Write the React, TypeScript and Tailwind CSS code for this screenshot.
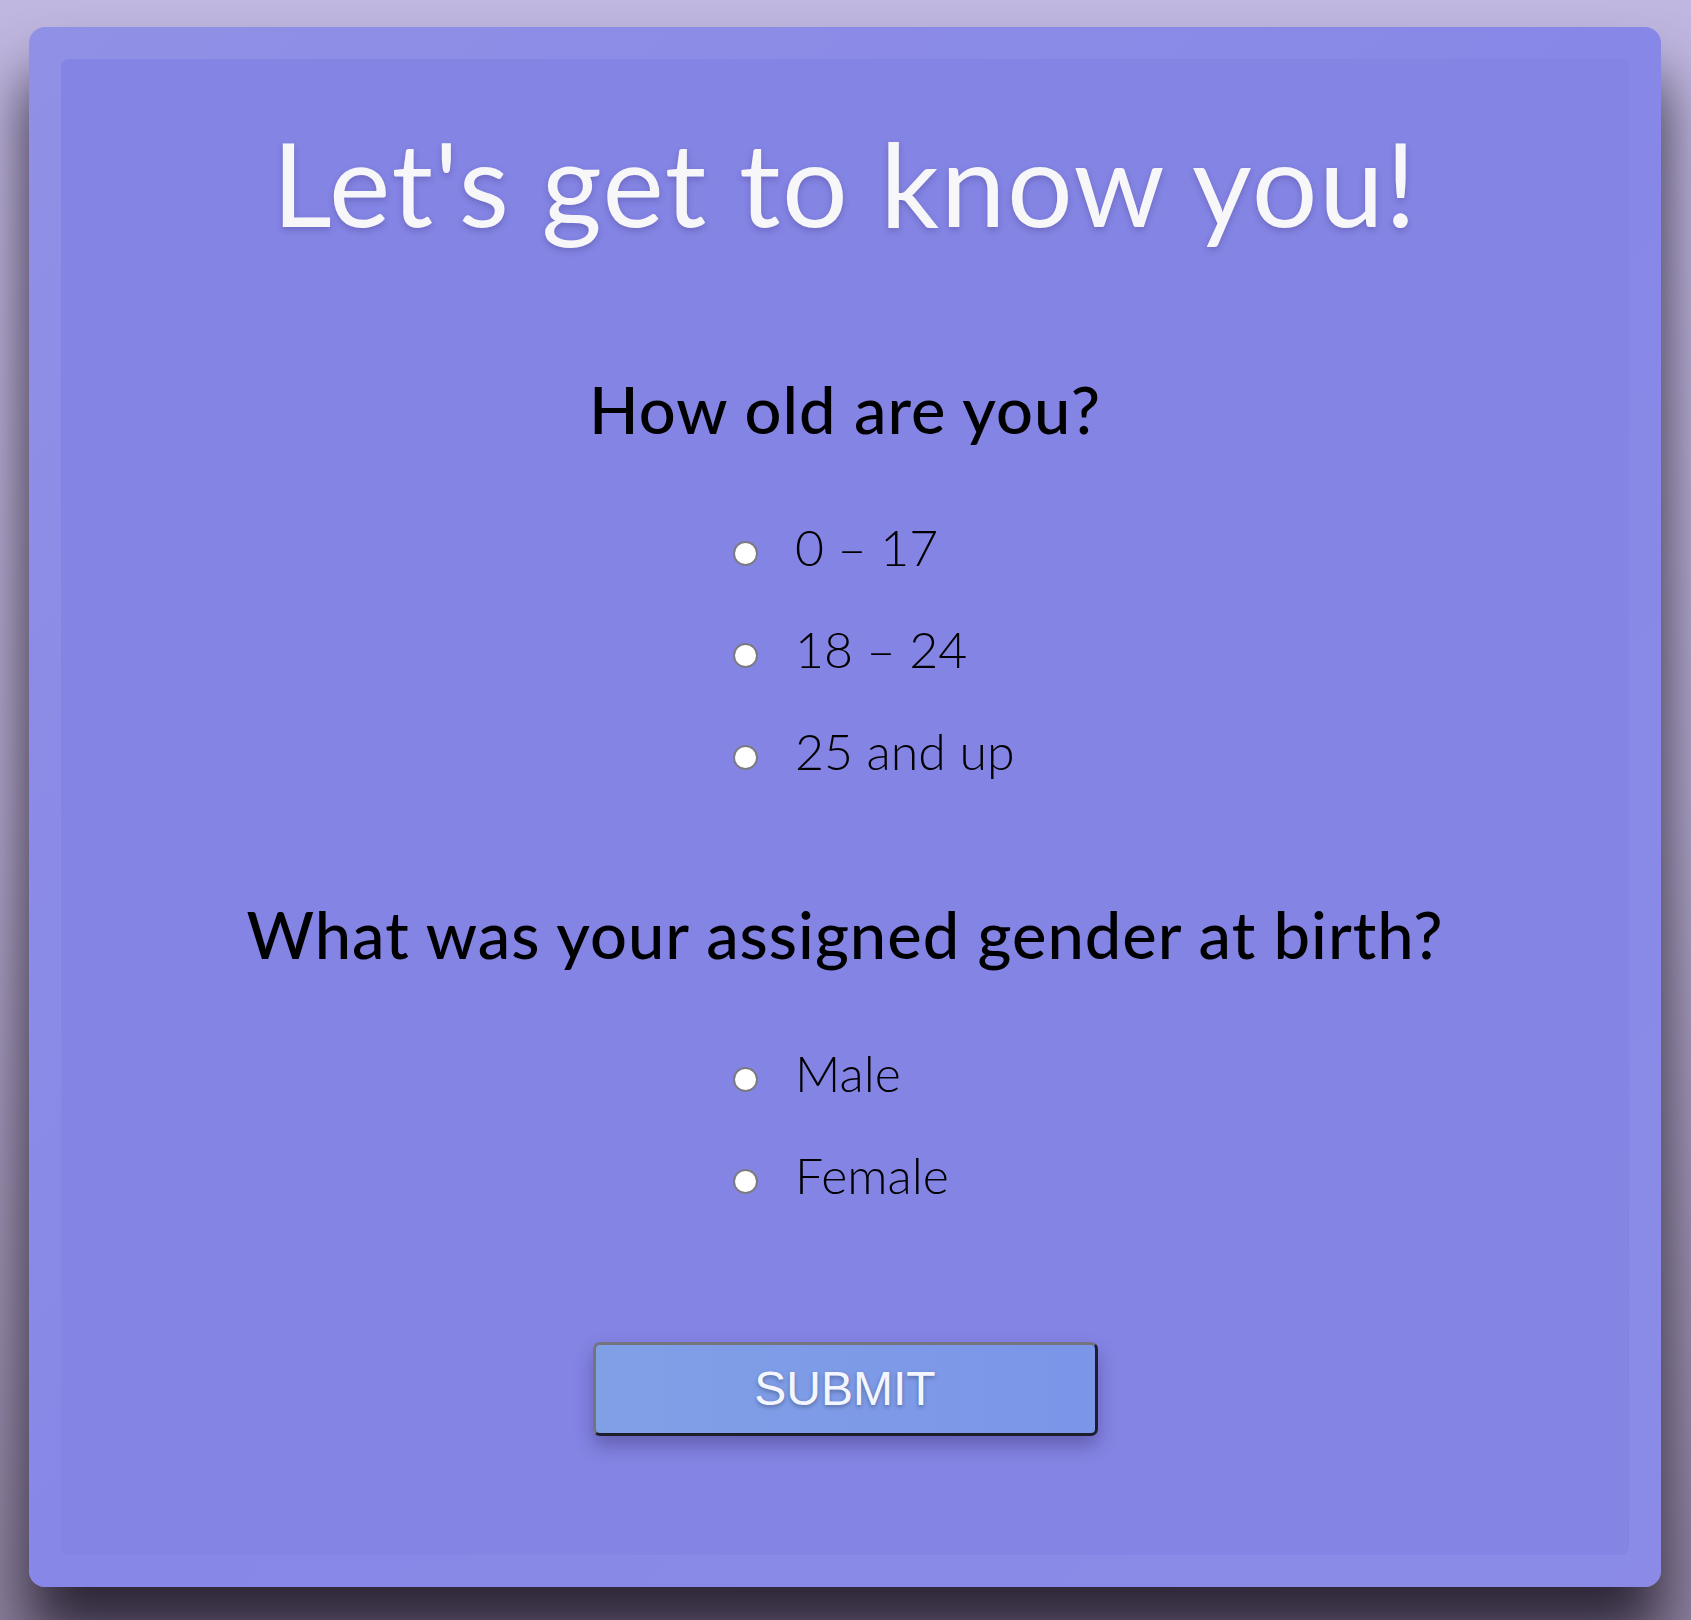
import { useState } from 'react'

const ages = ['0 – 17', '18 – 24', '25 and up']
const genders = ['Male', 'Female']

function Option({ name, label, checked, onPick }: { name: string; label: string; checked: boolean; onPick: () => void }) {
  return (
    <label className="flex h-[102px] items-center cursor-pointer">
      <input
        type="radio"
        name={name}
        checked={checked}
        onChange={onPick}
        className="appearance-none w-[25px] h-[25px] rounded-full bg-white border-2 border-[#7a7a80] checked:bg-[#3b3b9a] checked:shadow-[inset_0_0_0_4px_white] shrink-0"
      />
      <span className="ml-[37px] pb-3 whitespace-nowrap text-[50px] leading-none font-light text-black">{label}</span>
    </label>
  )
}

export default function App() {
  const [age, setAge] = useState('')
  const [gender, setGender] = useState('')

  return (
    <div className="min-h-screen bg-gradient-to-b from-[#c0b7e1] via-[#b2a7cc] to-[#8e829f] pt-[27px] pl-[29px] pr-[30px] pb-[34px] font-['Lato','Noto_Sans',sans-serif]">
      <div className="rounded-[16px] bg-gradient-to-br from-[#9090e6] via-[#8787e8] to-[#8b8be7] p-[32px] shadow-[0_50px_60px_rgba(45,38,55,1)]">
        <div className="rounded-[8px] bg-[#8484e4] pt-[66px] pb-[119px] flex flex-col items-center">
          <h1 className="text-[116px] leading-none font-normal tracking-[1.5px] text-[#f7f7fa] [text-shadow:0_3px_6px_rgba(40,30,90,0.25)]">
            Let's get to know you!
          </h1>

          <h2 className="mt-[136px] text-[65px] leading-none font-medium tracking-[1px] text-black">How old are you?</h2>
          <div className="mt-[60px] w-[224px] flex flex-col items-start">
            {ages.map((a) => (
              <Option key={a} name="age" label={a} checked={age === a} onPick={() => setAge(a)} />
            ))}
          </div>

          <h2 className="mt-[94px] text-[65px] leading-none font-medium tracking-[1px] text-black">What was your assigned gender at birth?</h2>
          <div className="mt-[61px] w-[224px] flex flex-col items-start">
            {genders.map((g) => (
              <Option key={g} name="gender" label={g} checked={gender === g} onPick={() => setGender(g)} />
            ))}
          </div>

          <button
            type="button"
            className="mt-[110px] w-[505px] h-[94px] rounded-[7px] border-[3px] border-t-[#74747f] border-l-[#74747f] border-b-[#1e1e2a] border-r-[#1e1e2a] bg-gradient-to-r from-[#80a0e6] to-[#7b95e8] shadow-[0_10px_18px_rgba(40,30,90,0.35)] font-['Liberation_Sans',Arial,sans-serif] text-[48px] text-[#f4f6ff] [text-shadow:0_2px_4px_rgba(0,0,0,0.3)]"
          >
            SUBMIT
          </button>
        </div>
      </div>
    </div>
  )
}
